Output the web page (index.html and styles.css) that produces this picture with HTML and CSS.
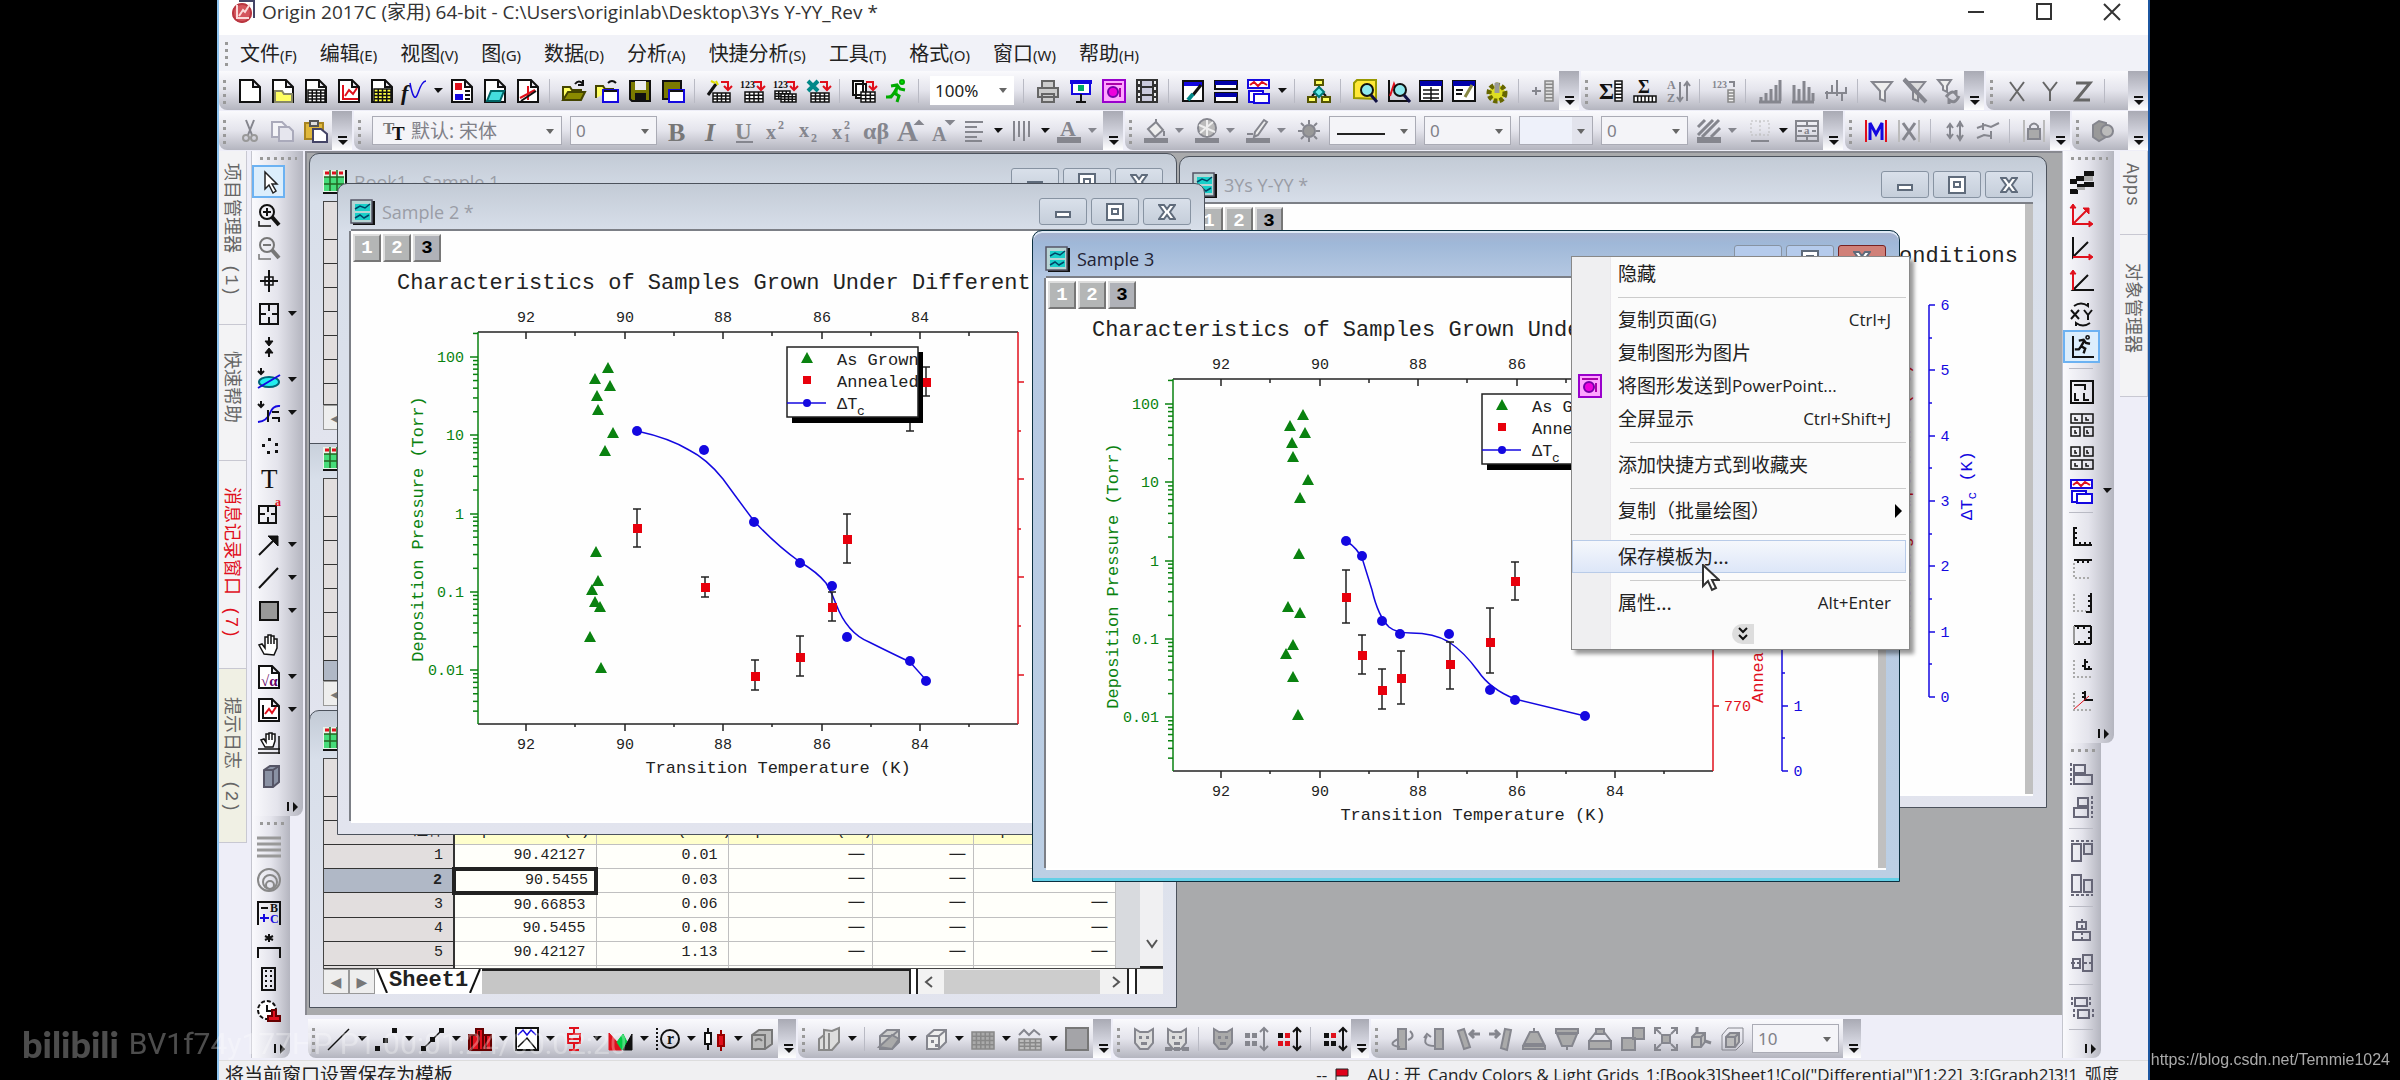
FILE: index.html
```html
<!DOCTYPE html>
<html lang="zh-CN">
<head>
<meta charset="utf-8">
<title>Origin 2017C (家用) 64-bit</title>
<link rel="stylesheet" href="styles.css">
</head>
<body>
<div class="app">
	<!--title bar-->
	<header class="title">
		<svg class="logo" viewBox="0 0 24 24"><path d="M8 1h15v17" fill="#fff" stroke="#446" stroke-width="2"/><circle cx="11" cy="13" r="10" fill="#d4545c"/><circle cx="11" cy="13" r="9" fill="none" stroke="#b83640" stroke-width="2"/><path d="M6 5v13h12M8 16l4-6 2 2 5-8" fill="none" stroke="#fbd9d9" stroke-width="2"/></svg>
		<h1>Origin 2017C (家用) 64-bit - C:\Users\originlab\Desktop\3Ys Y-YY_Rev *</h1>
		<div class="sys">
			<button aria-label="最小化"><svg viewBox="0 0 18 18"><path d="M1 9h16"/></svg></button>
			<button aria-label="最大化"><svg viewBox="0 0 18 18"><path d="M2 1h14v15H2z"/></svg></button>
			<button aria-label="关闭"><svg viewBox="0 0 18 18"><path d="M1 1l16 16M17 1L1 17"/></svg></button>
		</div>
	</header>
	<!--menu-->
	<nav class="menu">
		<i class="grip"></i>
		<a href="#">文件<small>(F)</small></a>
		<a href="#">编辑<small>(E)</small></a>
		<a href="#">视图<small>(V)</small></a>
		<a href="#">图<small>(G)</small></a>
		<a href="#">数据<small>(D)</small></a>
		<a href="#">分析<small>(A)</small></a>
		<a href="#">快捷分析<small>(S)</small></a>
		<a href="#">工具<small>(T)</small></a>
		<a href="#">格式<small>(O)</small></a>
		<a href="#">窗口<small>(W)</small></a>
		<a href="#">帮助<small>(H)</small></a>
	</nav>
	<!--toolbars-->
	<div class="dock">
		<div class="bar">
			<i class="grip"></i>
			<span class="set" data-icons="new newfolder newbook newgraph newmatrix func > layout notes newfn | open opentpl save savetpl | wizard imp1 imp3 impxls | batch run |"></span>
			<span class="combo zoom"><select aria-label="缩放"><option>100%</option></select></span>
			<span class="set" data-icons="| print slide ppt video | digit tile dup > | project | find zoomg results log gear | addcol"></span>
			<i class="more"></i>
		</div>
		<div class="bar">
			<i class="grip"></i>
			<span class="set" data-icons="sumcol sumrow sortaz | setval | bars1 bars2 bars3 | filter filterx filterr"></span>
			<i class="more"></i>
		</div>
		<div class="bar grow">
			<i class="grip"></i>
			<span class="set" data-icons="axx axy axz |"></span>
			<i class="more far"></i>
		</div>
	</div>
	<div class="dock">
		<div class="bar">
			<i class="grip"></i>
			<span class="set" data-icons="cut copy paste"></span>
			<i class="more"></i>
		</div>
		<div class="bar">
			<i class="grip"></i>
			<span class="combo font"><svg class="ic" viewBox="0 0 24 24"><text x="1" y="15" font-size="17" font-family="Liberation Serif" font-weight="bold" fill="#777" stroke="none">T</text><text x="10" y="21" font-size="19" font-family="Liberation Serif" font-weight="bold" fill="#111" stroke="none">T</text></svg><select aria-label="字体"><option>默认: 宋体</option></select></span>
			<span class="combo"><select aria-label="字号"><option>0</option></select></span>
			<span class="set dim" data-icons="bold italic under sup sub supsub greek bigger smaller align ^ valign ^ fcolor >"></span>
			<i class="more"></i>
		</div>
		<div class="bar">
			<i class="grip"></i>
			<span class="set dim" data-icons="fill > palette > pen > bulb"></span>
			<span class="combo line"><select aria-label="线型"><option></option></select></span>
			<span class="combo"><select aria-label="线宽"><option>0</option></select></span>
			<span class="combo swatch"><select aria-label="颜色"><option></option></select></span>
			<span class="combo"><select aria-label="大小"><option>0</option></select></span>
			<span class="set dim" data-icons="hatch > border ^ merge"></span>
			<i class="more"></i>
		</div>
		<div class="bar">
			<i class="grip"></i>
			<span class="set dim" data-icons="maskm maskx | updn curves | lock"></span>
			<i class="more"></i>
		</div>
		<div class="bar grow">
			<i class="grip"></i>
			<span class="set dim" data-icons="cube"></span>
			<i class="more far"></i>
		</div>
	</div>
	<div class="work">
		<!--left tabs-->
		<div class="tabs">
			<a href="#" class="t1">项目管理器 (1)</a>
			<a href="#" class="t2">快速帮助</a>
			<a href="#" class="t1 hot">消息记录窗口 (7)</a>
			<a href="#" class="t1 last">提示日志 (2)</a>
		</div>
		<div class="side">
			<div class="vbar wide">
				<i class="vgrip"></i>
				<div class="vset" data-icons="pointer* zoomin zoomout cross reader ^ select cyan ^ curve ^ dots text boxa arrow ^ slash ^ rect ^ hand sqrt ^ insgraph ^ handax box3d"></div>
				<i class="vmore"></i>
			</div>
			<div class="vbar thin">
				<i class="vgrip"></i>
				<div class="vset" data-icons="lines rings bc star colsc clock"></div>
				<i class="vmore two"></i>
			</div>
		</div>
		<div class="center">
			<main class="mdi">
				<section class="win book" id="book2">
					<div class="cap"><i data-ic="book"></i><h2>Book2 - Sample 2</h2></div>
					<div class="sheet"><table><tr class="top"><th></th></tr><tr><th></th></tr><tr><th></th></tr><tr><th></th></tr><tr><th></th></tr><tr><th></th></tr><tr><th></th></tr><tr class="cur"><th></th></tr></table></div>
					<div class="foot"><button>◀</button><button>▶</button></div>
				</section>
				<section class="win book" id="book1">
					<div class="cap"><i data-ic="book"></i><h2>Book1 - Sample 1</h2><span class="ctl"></span></div>
					<div class="sheet"><table><tr class="top"><th></th></tr><tr><th></th></tr><tr><th></th></tr><tr><th></th></tr><tr><th></th></tr><tr><th></th></tr><tr><th></th></tr><tr><th></th></tr></table></div>
					<div class="foot"><button>◀</button><button>▶</button></div>
				</section>
				<section class="win book" id="book3">
					<div class="cap"><i data-ic="book"></i><h2>Book3 - Sample 3</h2><span class="ctl"></span></div>
					<div class="sheet">
						<table>
							<colgroup><col class="c0"><col class="c1"><col class="c2"><col class="c3"><col class="c4"><col class="c5"></colgroup>
							<tr class="top"><th></th><th></th><th></th><th></th><th></th><th></th></tr>
							<tr><th></th><td></td><td></td><td></td><td></td><td></td></tr>
							<tr class="name"><th>注释</th><td>Temperature (K)</td><td>Pressure (Torr)</td><td>Temperature (°C)</td><td></td><td>Sample</td></tr>
							<tr><th>1</th><td>90.42127</td><td>0.01</td><td>—</td><td>—</td><td>—</td></tr>
							<tr class="cur"><th>2</th><td class="sel">90.5455</td><td>0.03</td><td>—</td><td>—</td><td>—</td></tr>
							<tr><th>3</th><td>90.66853</td><td>0.06</td><td>—</td><td>—</td><td>—</td></tr>
							<tr><th>4</th><td>90.5455</td><td>0.08</td><td>—</td><td>—</td><td>—</td></tr>
							<tr><th>5</th><td>90.42127</td><td>1.13</td><td>—</td><td>—</td><td>—</td></tr>
							<tr><th></th><td></td><td></td><td></td><td></td><td></td></tr>
						</table>
						<div class="vscroll"><svg viewBox="0 0 12 10"><path d="M1 1l5 7 5-7"/></svg></div>
					</div>
					<div class="foot">
						<button aria-label="上一张">◀</button><button aria-label="下一张">▶</button>
						<svg class="edge" viewBox="0 0 14 24"><path d="M2 0l10 24"/></svg><a href="#">Sheet1</a><svg class="edge" viewBox="0 0 14 24"><path d="M12 0L2 24"/></svg>
						<span class="fill"></span>
						<div class="hscroll"><svg viewBox="0 0 10 12"><path d="M8 1L2 6l6 5"/></svg><span></span><svg viewBox="0 0 10 12"><path d="M2 1l6 5-6 5"/></svg></div>
						<span class="corner"></span>
					</div>
				</section>
				<section class="win" id="g3ys">
					<div class="cap"><i data-ic="graph"></i><h2>3Ys Y-YY *</h2><span class="ctl"></span></div>
					<div class="client" data-plot="all"></div>
				</section>
				<section class="win" id="sample2">
					<div class="cap"><i data-ic="graph"></i><h2>Sample 2 *</h2><span class="ctl"></span></div>
					<div class="client" data-plot="s2"></div>
				</section>
				<section class="win active" id="sample3">
					<div class="cap"><i data-ic="graph"></i><h2>Sample 3</h2><span class="ctl"></span></div>
					<div class="client" data-plot="s3"></div>
				</section>
				<!--context menu-->
				<ul class="pop">
					<li><a href="#">隐藏</a></li>
					<li class="sep long"></li>
					<li><a href="#">复制页面<small>(G)</small><kbd>Ctrl+J</kbd></a></li>
					<li><a href="#">复制图形为图片</a></li>
					<li><i data-ic="ppt"></i><a href="#">将图形发送到<span>PowerPoint...</span></a></li>
					<li><a href="#">全屏显示<kbd>Ctrl+Shift+J</kbd></a></li>
					<li class="sep"></li>
					<li><a href="#">添加快捷方式到收藏夹</a></li>
					<li class="sep"></li>
					<li class="sub"><a href="#">复制（批量绘图）</a></li>
					<li class="sep"></li>
					<li class="on"><a href="#">保存模板为...</a></li>
					<li class="sep"></li>
					<li><a href="#">属性...<kbd>Alt+Enter</kbd></a></li>
					<li class="expand"><svg viewBox="0 0 12 16"><path d="M2 2l4 4 4-4M2 9l4 4 4-4"/></svg></li>
				</ul>
				<svg class="mouse" viewBox="0 0 18 28"><path d="M1 1v21l5-5 4 9 4-2-4-8h7z" fill="#fff" stroke="#333" stroke-width="2"/></svg>
			</main>
			<div class="dock bottom">
				<div class="bar">
					<i class="grip"></i>
					<span class="set" data-icons="pline ^ pscat ^ plinesym ^ pbar ^ pmulti ^ pbox ^ parea ^ ppolar ^ pcandle ^ box3g"></span>
					<i class="more"></i>
				</div>
				<div class="bar">
					<i class="grip"></i>
					<span class="set" data-icons="bars3d ^ | surf ^ cube3d ^ contour ^ image ^ gsquare"></span>
					<i class="more"></i>
				</div>
				<div class="bar">
					<i class="grip"></i>
					<span class="set" data-icons="mask1 mask2 | mask3 dotsg dotsr | dotsr2"></span>
					<i class="more"></i>
				</div>
				<div class="bar">
					<i class="grip"></i>
					<span class="set dim" data-icons="rot1 rot2 tilt1 tilt2 trap1 trap2 persp1 persp2 fit cubea cubeb"></span>
					<span class="combo"><select aria-label="角度"><option>10</option></select></span>
					<i class="more"></i>
				</div>
			</div>
		</div>
		<div class="side right">
			<div class="vbar wide">
				<i class="vgrip"></i>
				<div class="vset" data-icons="checker axr1 axr2 axr3 xy runax* - merge1 grid4a grid4b dup ^ - axl axt axrr axbox axin axinr"></div>
				<i class="vmore"></i>
			</div>
			<div class="vbar thin">
				<i class="vgrip"></i>
				<div class="vset" data-icons="all1 all2 - alt1 alt2 - alc1 alc2 - same -"></div>
				<i class="vmore two"></i>
			</div>
		</div>
		<div class="tabs right">
			<a href="#" class="t3">Apps</a>
			<a href="#" class="t4">对象管理器</a>
		</div>
	</div>
	<!--status bar-->
	<footer class="status">
		<span class="tip">将当前窗口设置保存为模板</span>
		<span>--</span>
		<svg viewBox="0 0 16 20"><path d="M2 20V3h12v7H2" fill="#e0001a" stroke="#222"/></svg>
		<span>AU : 开</span>
		<span>Candy Colors &amp; Light Grids</span>
		<span>1:[Book3]Sheet1!Col("Differential")[1:22]</span>
		<span>3:[Graph2]3!1</span>
		<span>弧度</span>
	</footer>
</div>
<div class="mark-l"><b>bilibili</b><span>BV1f74y177HP P1 00:01:24/00:02:20</span></div>
<div class="mark-r">https://blog.csdn.net/Temmie1024</div>
<script src="script.js"></script>
</body>
</html>
```
FILE: styles.css
```css
*{box-sizing:border-box;margin:0;padding:0;}
body{background:#000;font:18px "Open Sans","Noto Sans CJK SC",sans-serif;color:#222;height:100vh;overflow:hidden;}
ul{list-style:none;}
a{color:inherit;text-decoration:none;}
button{border:0;background:none;font:inherit;color:inherit;}
i{font-style:normal;}
svg{display:block;}
h1,h2{font-size:18px;font-weight:normal;white-space:nowrap;}
/*frame*/
.app{margin:0 250px 0 217px;height:calc(100vh + 8px);display:flex;flex-direction:column;background:#eeeef8;border-left:2px solid #8ec4f0;border-right:2px solid #1c56a0;}
.title{height:35px;flex:none;display:flex;align-items:flex-start;background:#fff;padding:0 12px;}
.title .logo{width:24px;height:24px;}
.title h1{margin-left:7px;font-size:19px;line-height:24px;color:#333;flex:1;}
.sys{display:flex;gap:50px;padding:3px 15px 0 0;}
.sys svg{width:18px;height:18px;fill:none;stroke:#333;stroke-width:2;}
.menu{height:36px;flex:none;display:flex;align-items:center;padding-left:2px;gap:23px;background:#f1f2f8;font:20px/34px "Noto Sans CJK SC",sans-serif;white-space:nowrap;}
.menu .grip{margin-right:-18px;}
.menu small{font:15px "Noto Sans",sans-serif;}
.grip{width:12px;height:26px;margin-left:2px;flex:none;background:radial-gradient(circle,#999 2px,transparent 2px) 0 0/7px 7px repeat-y;}
/*toolbars*/
.dock{display:flex;gap:2px;height:40px;flex:none;background:#eeeef8;}
.bar{display:flex;align-items:center;height:39px;background:linear-gradient(#fafafd,#e4e4ec 50%,#b4b5bf);border-radius:0 0 8px 8px;}
.bar.grow{flex:1;}
.set{display:flex;align-items:center;}
.set button{width:33px;height:33px;display:flex;align-items:center;justify-content:center;}
.ic{width:24px;height:24px;fill:none;stroke:#111;stroke-width:2;overflow:visible;}
.dim .ic{stroke:#85868e;}
.bsep{width:13px;height:24px;border-left:1px solid #b9bac4;margin-left:5px;margin-right:-5px;}
.drop{width:14px;height:5px;background:linear-gradient(#111,#111);clip-path:polygon(3px 0,12px 0,7px 5px);}
.set.dim .drop.soft{width:18px;background:#85868e;}
.more{width:20px;height:39px;margin-left:auto;flex:none;align-self:stretch;background:linear-gradient(#a9aab4,#d5d6e0 60%,#fff);position:relative;}
.more:before{content:"";position:absolute;left:6px;bottom:12px;width:9px;height:2px;background:#111;}
.more:after{content:"";position:absolute;left:6px;bottom:5px;border:5px solid transparent;border-top-color:#111;border-bottom:0;}
.combo{height:29px;width:87px;margin:0 4px;border:1px solid #aaabb5;background:#f4f4f8;display:flex;align-items:center;position:relative;}
.combo:after{content:"";position:absolute;right:7px;top:12px;border:4px solid transparent;border-top:5px solid #666;border-bottom:0;}
.combo select{appearance:none;border:0;background:transparent;width:100%;padding-left:5px;font:17px "Noto Sans","Noto Sans CJK SC",sans-serif;color:#808088;}
.combo.zoom{border:0;background:#fff;width:84px;margin-right:4px;}
.combo.zoom select{color:#222;}
.combo.font{width:190px;}
.combo.font .ic{margin-left:9px;}
.combo.font select{font-size:19px;}
.combo.line:before{content:"";position:absolute;left:7px;top:16px;width:48px;height:2px;background:#222;}
.combo.swatch{width:74px;background:linear-gradient(90deg,#eef1fa 52px,#e2e3ec 52px);}
/*work area*/
.work{flex:1;display:flex;min-height:0;}
.tabs{width:32px;flex:none;display:flex;flex-direction:column;background:#eeeef8;}
.tabs a{writing-mode:vertical-rl;text-orientation:sideways;font:18px/22px "Liberation Mono","Noto Sans CJK SC",monospace;color:#666;white-space:pre;border-right:1px solid #c8c8d2;border-bottom:1px solid #c8c8d2;background:#f3f3f5;width:28px;display:flex;justify-content:flex-start;padding:12px 4px 0 0;}
.tabs .t1{height:174px;}
.tabs .t2{height:136px;padding-top:26px;}
.tabs .hot{color:#e0101c;height:208px;padding-top:26px;}
.tabs .last{background:#f0f0e4;padding-top:28px;}
.tabs.right .t3{height:84px;margin-left:4px;}
.tabs.right .t4{height:162px;margin-left:4px;padding-top:28px;}
.side{width:54px;flex:none;display:flex;flex-direction:column;}
.vbar{display:flex;flex-direction:column;background:linear-gradient(90deg,#fafafd,#e4e4ec 50%,#b4b5bf);border-radius:0 0 8px 0;border-left:1px solid #c4c5ce;}
.vbar.wide{width:52px;height:665px;}
.right .vbar.wide{height:592px;}
.vbar.thin{width:39px;flex:1;margin-bottom:2px;}
.vgrip{height:14px;margin:0 6px;flex:none;background:radial-gradient(circle,#999 2px,transparent 2px) 0 4px/7px 7px repeat-x;}
.vset{display:grid;grid-template-columns:33px 14px;}
.right .vset{grid-template-columns:37px 14px;}
.vset button{grid-column:1;height:33px;display:flex;align-items:center;justify-content:center;}
.vset .drop{grid-column:2;align-self:center;}
.vset .bsep{grid-column:1;width:24px;height:7px;margin:5px 0 0 6px;border:0;border-top:1px solid #b9bac4;}
.vset button.down{border:2px solid #6cb2f2;background:#dceefc;}
.vmore{margin-top:auto;height:16px;flex:none;position:relative;}
.vmore:before{content:"";position:absolute;right:14px;top:2px;width:2px;height:9px;background:#111;}
.vmore:after{content:"";position:absolute;right:5px;top:2px;border:5px solid transparent;border-left-color:#111;border-right:0;}
.center{flex:1;min-width:0;display:flex;flex-direction:column;}
.mdi{flex:1;position:relative;overflow:hidden;background:#a9aaac;border-top:2px solid #888990;border-left:2px solid #888990;}
.dock.bottom{height:45px;padding:4px 0 0 3px;}
.bottom .more{width:18px;}
/*mdi windows, each is placed on the free canvas*/
.win{position:absolute;width:868px;height:652px;border:1px solid #4c525c;border-radius:10px 10px 0 0;padding:0 13px 13px;background:linear-gradient(#c3cbd6,#d8dfea 48px,#e2e4ee);display:flex;flex-direction:column;}
.win.active{background:linear-gradient(#a8b0cc,#9fb8d8 12px,#b5c8e2 46px,#bccfe4);border-color:#0c3040;box-shadow:inset 0 -3px #63cfe6,inset 0 2px #dfe9f5;}
.cap{height:47px;flex:none;display:flex;align-items:center;padding-top:8px;}
.cap h2{margin-left:7px;color:#9a9da6;flex:1;}
.active .cap h2{color:#223;}
.ctl{display:flex;gap:4px;}
.ctl button{width:48px;height:27px;border:1px solid #8793a2;border-radius:3px;background:linear-gradient(#d9e0ea,#c5ceda);display:flex;align-items:center;justify-content:center;}
.ctl svg{width:18px;height:18px;fill:#fff;stroke:#5f6b7b;stroke-width:2;}
.active .ctl button{background:#b5cbec;}
.active .ctl button:last-child{background:#d08078;border-color:#722;}
#book1{left:2px;top:0;height:291px;}
#book2{left:2px;top:277px;height:290px;}
#book3{left:2px;top:557px;height:298px;}
#g3ys{left:872px;top:3px;}
#sample2{left:30px;top:30px;}
#sample3{left:725px;top:77px;}
.client{position:relative;flex:1;background:#fefefe;border-right:8px solid #c0c0c0;box-shadow:0 -2px #7c7f86,-2px 0 #7c7f86,0 2px #fff;}
.client>svg{width:832px;height:590px;}
.layers{position:absolute;left:2px;top:3px;display:flex;gap:2px;}
.layers button{width:28px;height:28px;background:#b4b6b6;border:2px solid;border-color:#ddd #777 #777 #ddd;font:bold 19px/22px "Liberation Mono",monospace;color:#fff;}
.layers button:last-child{color:#000;background:#b0b2b8;}
.client text{font-family:"Liberation Mono",monospace;font-size:15px;}
.client .head{font-size:22px;}
.client .lab{font-size:17px;}
.client .idx{font-size:13px;}
/*worksheets*/
.sheet{flex:1;min-height:0;overflow:hidden;display:flex;background:#d8dade;border:solid #444;border-width:1px 0 1px 1px;}
.sheet table{border-collapse:collapse;table-layout:fixed;width:791px;height:0;background:#fffffa;}
.sheet tr{height:24px;}
.sheet tr.top{height:37px;}
.sheet th,.sheet td{border:1px solid #c0c0c0;text-align:right;font:15px/22px "Liberation Mono","Noto Sans CJK SC",monospace;padding:0 10px 0 0;height:24px;white-space:nowrap;overflow:hidden;}
.sheet td:nth-child(n+4){font:20px/14px "Noto Sans CJK SC",sans-serif;padding-right:6px;vertical-align:top;}
.sheet th{background:#e2dede;border:solid #333;border-width:0 2px 1px 0;}
.sheet .top th{height:37px;}
.sheet .name td,.sheet .name td:nth-child(n+4){background:#ffffcc;padding:0;text-align:left;font:15px/22px "Liberation Mono",monospace;}
.sheet .cur th{background:#b0b8c6;font-weight:bold;}
.sheet td.sel{border:4px solid #222;line-height:16px;padding-right:6px;}
.c0{width:130px;}.c1{width:142px;}.c2{width:132px;}.c3{width:144px;}.c4{width:101px;}.c5{width:142px;}
.vscroll{width:26px;margin-left:24px;background:#f0f0f2;display:flex;align-items:flex-end;justify-content:center;border-bottom:2px solid #222;padding-bottom:16px;}
.foot svg,.vscroll svg{fill:none;stroke:#555;stroke-width:2;width:12px;height:12px;}
.foot{height:25px;flex:none;display:flex;align-items:stretch;background:#fff;}
.foot button{width:26px;background:#eee;border:1px solid #999;font:14px "DejaVu Sans";color:#777;}
.foot .edge{width:14px;height:24px;stroke:#111;}
.foot a{font:bold 22px/24px "Liberation Mono",monospace;}
.foot .fill{flex:1;background:#c6c6c6;border:solid #222;border-width:2px 2px 0 0;}
.hscroll{width:213px;margin-left:5px;display:flex;align-items:center;justify-content:space-around;border:solid #222;border-width:0 2px;background:#f2f2f2;}
.hscroll span{width:156px;height:24px;background:#cdcdcd;}
.corner{width:28px;margin-left:6px;border-left:2px solid #222;background:#f4f4f4;}
/*context menu*/
.pop{position:absolute;left:1264px;top:103px;width:339px;padding:0 3px 0 0;background:linear-gradient(90deg,#efeff1 38px,#d8d4dc 38px,#fbfbfb 39px);border:1px solid #888;box-shadow:4px 4px 4px rgba(0,0,0,.4);font:19px/32px "Noto Sans CJK SC",sans-serif;}
.pop li{height:33px;display:flex;position:relative;}
.pop a{flex:1;height:32px;margin-left:46px;display:flex;align-items:center;white-space:nowrap;}
.pop small,.pop kbd,.pop span{font:17px "Open Sans",sans-serif;}
.pop kbd{margin-left:auto;padding-right:15px;}
.pop [data-ic]{position:absolute;left:6px;top:5px;}
.pop .sep{height:13px;margin-left:58px;background:linear-gradient(#ccc,#ccc) 0 7px/100% 1px no-repeat;}
.pop .sep.long{margin-left:46px;}
.pop .on{background:linear-gradient(#f6f8fc,#dce6f8);box-shadow:inset 0 0 0 1px #b8cbe8;}
.pop .sub:after{content:"";position:absolute;right:4px;top:10px;border:7px solid transparent;border-left-color:#000;border-right:0;}
.pop .expand{height:30px;justify-content:center;align-items:center;padding-left:8px;}
.expand svg{width:22px;height:20px;padding:2px;background:#ddd;border-radius:10px 0 0 10px;fill:none;stroke:#111;stroke-width:2;}
.mouse{position:absolute;left:1395px;top:411px;width:18px;height:28px;}
/*status*/
.status{height:28px;flex:none;background:#f0f0f2;border-top:1px solid #ddd;display:flex;align-items:flex-start;gap:7px;padding:0 29px 0 6px;font:17px/28px "Open Sans","Noto Sans CJK SC",sans-serif;white-space:nowrap;}
.status .tip{margin-right:auto;font-size:19px;}
.status svg{width:16px;height:20px;margin:5px 10px 0 0;}
/*watermarks lie over everything*/
.mark-l,.mark-r{position:fixed;white-space:nowrap;color:#fff;}
.mark-l{left:22px;bottom:14px;opacity:.3;display:flex;align-items:center;gap:10px;font:30px/40px Roboto,sans-serif;}
.mark-l b{font:900 36px/44px Lato,sans-serif;}
.mark-r{right:10px;bottom:10px;color:#aaa;font:16px/20px "Liberation Sans",sans-serif;}
```
FILE: script.js
```js
var G = '#85868e', R = '#e0101c', B = '#1408e0';
function p(d,s,f,w){
	return '<path d="'+d+'"'+(s?' stroke="'+s+'"':'')+(f?' fill="'+f+'"':'')+(w?' stroke-width="'+w+'"':'')+'/>';
}
function t(s,x,y,size,c,more){
	return '<text x="'+x+'" y="'+y+'" font-size="'+size+'" fill="'+(c||'#111')+'" stroke="none" font-family="Liberation Serif" '+(more||'font-weight="bold"')+'>'+s+'</text>';
}
//grid with n cells
function g(x,y,w,h,n,m,f,c){
	var d = 'M'+x+' '+y+'h'+w+'v'+h+'h-'+w+'z', i;
	for(i=1;i<n;i++) d += 'M'+(x+w*i/n)+' '+y+'v'+h;
	for(i=1;i<m;i++) d += 'M'+x+' '+(y+h*i/m)+'h'+w;
	return p(d,c||'#111',f||'#fff',1.5);
}
//filled boxes
function b(list,c){
	return list.map(function(a){return '<rect x="'+a[0]+'" y="'+a[1]+'" width="'+a[2]+'" height="'+a[3]+'" fill="'+(c||'#111')+'" stroke="none"/>'}).join('');
}
var page = p('M2 1h13l7 7v15H2zM15 1v7h7','#111','#fff'),
	down = p('M14 3h7v7M17 7l4 4 4-4',R,'none'),
	run = '<circle cx="17" cy="3" r="2"/>'+p('M6 7l6-1 3 4 5 1M13 7l-4 7 5 3-2 6M9 14l-3 4H1','','',3),
	front = p('M3 9l7-6h12v12l-7 7H3zM3 9h12v13M15 9l7-6',G,'#ccc'),
	axes = p('M3 1v21h21'),
	lens = '<circle cx="14" cy="11" r="6" fill="#8fe9ee"/>'+p('M18 16l6 7','#114',0,3),
	cat = p('M3 2l5 3h8l5-3v14l-5 6H8l-5-6z',G,'#ddd')+b([[7,9,3,3],[14,9,3,3],[9,15,6,3]],G),
	bottomWins = p('M2 12h14v11H2z',B,'#fff')+p('M7 15h15v9H7z',B,'#fff'),
	mdot = function(c1,c2){return b([[1,6,5,5],[8,6,5,5]],c1)+b([[1,14,5,5],[8,14,5,5]],c2)+p('M20 1v22M16 5l4-4 4 4M16 19l4 4 4-4',c1==G?G:'#111')};
var icons = {
	'new':page,
	newfolder:page+p('M4 12h7l2 3h8v8H4z','#886','#ffff60'),
	newbook:page+g(4,11,17,12,4,4),
	newgraph:page+p('M6 6v14h15',R)+p('M8 17l4-6 4 4 4-6',R),
	newmatrix:page+g(4,10,17,13,4,4,'#ffff40'),
	func:p('M7 4q4 22 8 10t8-12',B,0,1.5)+t('f',-2,21,22,'#111','font-style="italic" font-weight="bold"'),
	layout:page+b([[5,4,7,7]],R)+b([[5,15,8,6]],B)+p('M15 12h5M15 16h5M15 20h5'),
	notes:page+p('M8 12h13l-4 10H4z','#066','#4dd'),
	newfn:page+p('M12 7v14M4 19l15-8',R)+p('M5 22L20 12'),
	open:p('M1 21V8h7l2 3h9v3','#440','#ffff60')+p('M1 21l5-8h17l-4 8z','#440','#8a8a00')+p('M13 5q4-5 8 0M21 1v5h-5'),
	opentpl:p('M1 19V7h7l2 3h9','#440','#ffff60')+p('M8 11h15v12H8z',B,'#fff')+p('M9 12h13')+p('M13 4q4-4 8 0'),
	save:p('M2 2h20v20H4l-2-2z','#111','#7a7a00')+b([[7,2,11,9]],'#eee')+b([[7,14,11,8]]),
	savetpl:p('M2 2h18v18H2z','#111','#7a7a00')+p('M8 11h15v12H8z',B,'#fff')+p('M9 12h13'),
	wizard:p('M1 16L9 5',0,0,3)+p('M9 2l2 4M4 2l4 2','#dd0')+down+g(6,14,17,9,4,3),
	imp1:t('123',0,9,10)+down+g(5,13,18,10,4,3),
	imp3:t('123',0,9,10)+down+g(2,12,15,8,4,3)+g(8,15,15,8,4,3),
	impxls:p('M2 2l10 10M12 2L2 12','#088',0,4)+down+g(5,14,18,9,4,3),
	batch:p('M1 2h10v14H1zM4 5h10v14H4z','#111','#fff')+down+g(9,13,14,10,3,3),
	run:'<g stroke="#0a0" fill="#0e0">'+run+'</g>',
	print:p('M6 9V2h12v7M2 9h20v9H2zM6 15h12v8H6z','#666','#ccc'),
	slide:p('M1 3h22',B,0,4)+p('M3 4h18v11H3z',B,'#fff')+p('M12 15v7M7 23h10')+b([[9,6,6,6]],'#0a6'),
	ppt:p('M1 1h22v22H1z','#90c','#ffa6ff')+p('M4 5h16','#a0a')+'<circle cx="11" cy="13" r="5" fill="#e0d" stroke="#70a"/>'+p('M18 9v9','#a0a'),
	video:b([[1,0,22,24]],'#333')+b([[7,2,10,5],[7,9,10,6],[7,17,10,5]],'#ccd')+b([[3,2,2,3],[3,8,2,3],[3,14,2,3],[3,19,2,3],[19,2,2,3],[19,8,2,3],[19,14,2,3],[19,19,2,3]],'#eee'),
	digit:p('M2 2h20v20H2z','#111','#fff')+b([[3,3,18,4]],B)+p('M20 6l-8 10',0,0,3)+p('M12 15l-5 6','#088',0,4),
	tile:p('M1 2h22v8H1zM1 14h22v9H1z','#111','#fff')+b([[1,2,22,4],[1,14,22,4]],'#00a'),
	dup:p('M1 1h21v8H1z',B,'#fff')+p('M3 6l4-3 4 4 4-4 5 3',R)+bottomWins,
	project:p('M12 6v5M5 17l5-5M19 17l-5-5')+p('M8 1h8v5H8zM1 18h8v5H1zM15 18h8v5h-8z','#550','#ffff60')+p('M12 8l5 5-5 5-5-5z','#077','#6ee'),
	find:p('M1 19V4l3-3h19v19z','#990','#ffe838')+lens,
	zoomg:axes+p('M4 17l4-12 3 8 4-8',R)+lens,
	results:p('M1 2h22v20H1z','#111','#fff')+b([[1,2,22,5]],'#00a')+p('M4 11h16M4 15h16M4 19h16M12 8v14',0,0,1.5),
	log:p('M1 2h22v20H1z','#111','#fff')+b([[1,2,22,5]],'#00a')+p('M4 11h7M4 15h6')+p('M20 6l-7 12','#884',0,3),
	gear:'<circle cx="12" cy="14" r="8" stroke="#660" stroke-width="5" stroke-dasharray="4 2" fill="#dd2"/>'+p('M12 4v10','#999',0,5),
	addcol:p('M1 12h9M5 8v8',G)+g(14,2,8,20,1,6,'#ddd','#888'),
	sumcol:t('Σ',-1,20,23)+g(15,2,7,20,1,6),
	sumrow:t('Σ',5,14,18)+g(1,17,22,6,6,1),
	sortaz:t('A',1,10,12,G)+t('Z',1,23,12,G)+p('M14 3v19M11 18l3 4 3-4M21 22V3M18 7l3-4 3 4',G),
	setval:t('123',0,9,10,G)+p('M17 3h5v5',G)+g(16,11,6,12,1,4,'#eee','#888'),
	bars1:p('M1 23h22M3 22v-4M8 22v-8M13 22V10M18 22V6M22 22V1',G,0,3),
	bars2:p('M1 23h22M3 22V6M8 22V10M13 22V2M18 22V8M22 22v-8',G,0,3),
	bars3:p('M1 14h22M3 20v-8M8 14V6M13 17V1M18 22v-9M22 14V8',G,0,2),
	filter:p('M2 3h20l-7 9v10l-5-2v-8z',G,'#eee'),
	filterx:p('M2 3h20l-7 9v10l-5-2v-8z',G,'#ddd')+p('M1 0l22 23',G,0,4),
	filterr:p('M2 1h13l-4 6v6l-4-2V7z',G,'#eee')+p('M10 18q6-8 10-3v-4M23 17q-4 9-10 4v4',G,0,3),
	axx:p('M5 3l14 19M19 3L5 22','#666'),
	axy:p('M5 3l7 9 7-9M12 12v10','#666'),
	axz:p('M5 4h14L5 21h14','#666',0,3),
	cut:p('M8 1l6 15M16 1l-6 15',G)+'<circle cx="8" cy="19" r="3" stroke="#999"/><circle cx="16" cy="19" r="3" stroke="#999"/>',
	copy:p('M1 3h10l4 4v11H1z','#aab','#f4f4f8')+p('M8 8h10l4 4v10H8z','#aab','#e6e6ee'),
	paste:p('M1 4h18v16H1z','#a88420','#e0b83c')+p('M6 2h8v5H6z','#555','#ddd')+p('M9 10h8l6 5v8H9z','#446','#fff'),
	bold:t('B',2,22,26,'#777'),italic:t('I',6,22,26,'#777','font-style="italic" font-weight="bold"'),under:t('U',3,20,23,'#888')+p('M4 23h17',G),
	sup:t('x',1,20,20,G)+t('2',13,10,12,G),sub:t('x',1,18,20,G)+t('2',13,23,12,G),supsub:t('x',1,20,20,G)+t('2',13,10,12,G)+t('1',13,23,12,G),
	greek:t('αβ',-1,20,24,G),
	bigger:t('A',0,22,29,G)+p('M19 5l3-3 3 3z',G,G),smaller:t('A',2,22,20,G)+p('M17 2l3 3 3-3z',G,G),
	align:p('M2 3h18M2 8h12M2 13h18M2 18h12M2 22h17',G),
	valign:p('M4 2v20M9 2v16M14 2v20M19 2v16',G),
	fcolor:t('A',3,17,22,G)+b([[0,18,24,6]],G),
	fill:p('M4 10l8-7 7 8-8 7zM12 3V0M20 12v5',G,'#eee')+b([[0,19,24,5]],G),
	palette:'<circle cx="12" cy="9" r="9" fill="#bbb"/>'+p('M4 6l16 7M12 1v16M5 14l13-11','#eee')+b([[0,19,24,5]],G),
	pen:p('M18 1l3 2-9 13-4 2 1-5zM1 15h6',G,'#eee')+b([[0,19,24,5]],G),
	bulb:'<circle cx="12" cy="12" r="6" fill="#999"/>'+p('M12 1v4M12 19v4M1 12h4M19 12h4M4 4l3 3M20 4l-3 3M4 20l3-3M20 20l-3-3',G),
	hatch:p('M1 8l7-7M1 16L16 1M5 18L22 1M14 18l9-9',G,0,3)+b([[0,18,24,6]],G),
	border:p('M3 2h18v14H3zM12 2v14','#bbb',0,1).replace('/>',' stroke-dasharray="2 2"/>')+p('M3 22h18',G),
	merge:p('M1 2h22v20H1zM1 7h22M1 17h22M12 2v5M12 17v5',G)+t('a',9,15,11,G)+p('M3 12h4M17 12h4',G),
	maskm:p('M2 1v22M22 1v22',R)+p('M6 21V4l6 11 6-11v17',B,0,3),
	maskx:p('M2 1v22M22 1v22','#bbb')+p('M6 4l12 17M18 4L6 21',G,0,3),
	updn:p('M7 6v12M4 9l3-4 3 4M4 15l3 4 3-4M17 2v20M14 8l3-5 3 5M14 16l3 5 3-5',G),
	curves:p('M1 9l8-3 6 2 8-4M1 19l7-3 6 1M7 4v7M15 12v8',G),
	lock:p('M2 1v22M22 1v22','#bbb')+p('M6 10h12v10H6z',G,'#aaa')+p('M8 10V7q4-5 8 0v3',G),
	cube:p('M2 6l6-4 7 2v14l-7 4-6-4z',G,'#999')+'<circle cx="16" cy="12" r="6" fill="#bbb"/>',
	pointer:p('M8 2v17l4-4 4 8 3-2-4-7h5z','#222','#fff',1.5),
	zoomin:'<circle cx="10" cy="9" r="7"/>'+p('M6 9h8M10 5v8')+p('M15 14l7 8',0,0,4)+p('M2 18v5h12',0,0,1.5),
	zoomout:'<circle cx="10" cy="9" r="7" stroke="#777"/>'+p('M6 9h8','#777')+p('M15 14l7 8','#777',0,4)+p('M2 18v5h12','#777',0,1.5),
	cross:p('M12 1v22M3 12h18')+p('M8 8h8v8H8z',0,0,1.5),
	reader:p('M3 2h18v20H3zM12 2v7M12 15v7M3 12h6M15 12h6'),
	select:p('M12 2v8M12 14v8')+p('M8 6l4 5 4-5zM8 18l4-5 4 5z','','#111',1),
	cyan:'<ellipse cx="12" cy="14" rx="10" ry="5" stroke="#067" fill="#2ee"/>'+p('M1 20L23 7',B)+p('M4 0v6M1 3l3 3 3-3'),
	curve:p('M1 21q9-1 12-9t10-7',B)+p('M4 0v6M1 3l3 3 3-3M11 9v12M15 11h7M15 17h7v4'),
	dots:b([[11,4,3,3],[5,10,3,3],[18,9,3,3],[10,17,3,3],[18,16,3,3]]),
	text:t('T',4,21,27,'#111','font-weight="normal"'),
	boxa:p('M2 6h17v17H2zM11 6v6M11 17v6M2 14h6M14 14h5')+t('a',18,6,12,R),
	arrow:p('M2 22L18 6')+p('M11 3h10v10z','','#111',1),
	slash:p('M2 22L21 2'),
	rect:p('M3 3h18v18H3z','#111','#999'),
	hand:p('M7 22L2 13l3-1 3 4V5h3v7-9h3v9-8h3v8-5h3v9l-3 7z','#111','#fff',1.5),
	sqrt:page+t('√α',4,21,15,'#606'),
	insgraph:page+p('M6 7v13h14')+p('M8 16l4-5 3 4 4-6',R),
	handax:p('M8 16L4 9l3-1 2 3V3h3v6-7h3v7-6h3v7l-2 6z','#111','#fff',1.5)+p('M1 18h22M1 22h22M22 5v18',0,0,1.5),
	box3d:p('M7 6l6-4h9v16l-6 5H7zM7 6h9v17M16 6l6-4','#556','#8a92a4'),
	lines:p('M0 3h24M0 9h24M0 15h24M0 21h24','#999',0,3),
	rings:'<circle cx="12" cy="12" r="11" stroke="#888"/><circle cx="13" cy="14" r="7" stroke="#888"/><circle cx="13" cy="17" r="4" stroke="#888"/>',
	bc:p('M1 24V1h22v23')+p('M4 7h7')+p('M3 17h9M7 13v8',B)+t('B',13,11,12)+t('C',13,22,12,B),
	star:p('M12 0v8M8 2l8 4M16 2L8 6')+p('M1 24V14h22v10'),
	colsc:p('M5 1h13v22H5z')+p('M9 3v18M14 3v18').replace('/>',' stroke-dasharray="2 3"/>'),
	clock:'<circle cx="10" cy="10" r="9" fill="#fff" stroke-dasharray="4 2"/>'+p('M10 5v6h5')+p('M15 10h4v6h4v5H11v-5h4z','#600',R),
	checker:b([[14,1,10,5],[6,6,8,5],[0,9,7,5],[14,12,10,5],[7,14,8,5],[0,19,8,5]])+b([[14,6,9,5],[7,17,8,3]],'#aaa'),
	axr1:p('M3 2v19h19',R)+p('M3 21L18 6',R)+p('M0 5l3-4 3 4zM19 18l4 3-4 3zM13 5h6v6z',R,R,1),
	axr2:p('M3 1v20L18 6')+p('M3 21h19',R)+p('M19 18l4 3-4 3z',R,R,1),
	axr3:p('M24 21H3L18 6')+p('M3 2v19',R)+p('M0 5l3-4 3 4z',R,R,1),
	xy:p('M1 8l8 9M9 8l-8 9M14 8l4 5 4-5M18 13v5M4 4q7-5 14 0V1M20 21q-7 5-14 0v3'),
	runax:axes+'<g transform="translate(4 0) scale(.8)">'+run+'</g>',
	merge1:p('M1 1h22v22H1zM4 5h11v5M5 13v7h4M14 13v7h5'),
	grid4a:p('M1 1h22v9H1zM12 1v9M1 14h9v9H1zM14 14h9v9h-9zM5 4v3h3M16 4v3h3M5 17v3h2M17 17v3h2',0,0,1.5),
	grid4b:p('M1 14h22v9H1zM12 14v9M1 1h9v9H1zM14 1h9v9h-9zM5 17v3h3M16 17v3h3M5 4v3h2M17 4v3h2',0,0,1.5),
	axl:p('M4 3v18h18M4 4h3M4 9h3M4 14h3M10 21v-3M15 21v-3M20 21v-3'),
	axt:p('M4 3h18M8 3v3M13 3v3M18 3v3')+p('M4 6v15h17','#aaa').replace('/>',' stroke-dasharray="2 2"/>'),
	axrr:p('M21 3v19h-5M21 6h-3M21 11h-3M21 16h-3')+p('M4 4v17h12','#aaa').replace('/>',' stroke-dasharray="2 2"/>'),
	axbox:p('M21 3v18M4 3h17M4 21h17M8 3v3M14 3v3M9 21v-3M15 21v-3M21 9h-3M21 15h-3')+p('M4 3v18','#999'),
	axin:p('M15 3v10h7M15 6h3M15 10h-3M19 13v-3')+p('M4 4v17h17','#aaa').replace('/>',' stroke-dasharray="2 2"/>'),
	axinr:p('M15 2v9h8M12 4h3M12 8h3')+p('M3 21L19 7',R,0,1)+p('M4 4v17h17','#aaa').replace('/>',' stroke-dasharray="2 2"/>'),
	all1:p('M4 3h11v8H4zM4 13h18v9H4z','#667')+p('M1 1v22','#667').replace('/>',' stroke-dasharray="3 2"/>'),
	all2:p('M8 3h10v8H8zM4 13h14v9H4z','#667')+p('M22 1v22','#667').replace('/>',' stroke-dasharray="3 2"/>'),
	alt1:p('M2 4h9v17H2zM14 4h8v10h-8z','#667')+p('M1 1h22','#667').replace('/>',' stroke-dasharray="3 2"/>'),
	alt2:p('M2 2h9v17H2zM14 7h8v12h-8z','#667')+p('M1 22h22','#667').replace('/>',' stroke-dasharray="3 2"/>'),
	alc1:p('M7 4h9v7H7zM3 14h17v8H3z','#667')+p('M12 1v23','#667').replace('/>',' stroke-dasharray="4 2"/>'),
	alc2:p('M3 8h7v9H3zM13 4h9v16h-9z','#667')+p('M1 12h23','#667').replace('/>',' stroke-dasharray="4 2"/>'),
	same:p('M5 2h12v8H5zM8 14h11v8H8z','#667')+p('M2 1v10M20 1v10M4 13v10M23 13v10','#667').replace('/>',' stroke-dasharray="3 2"/>'),
	pline:p('M1 23L22 2',0,0,1.5),
	pscat:b([[1,19,5,5],[9,11,5,5],[18,1,5,5]]),
	plinesym:p('M3 21L20 4',0,0,1.5)+b([[0,19,5,5],[9,10,5,5],[18,1,5,5]]),
	pbar:p('M1 23V8h7V2h7v21M15 8h8v15H1','#600',R)+p('M4 9v13M11 4v18M18 9v13','#500'),
	pmulti:p('M1 1h22v22H1z','#111','#fff')+p('M3 8l5-5 4 5 4-5 5 5',B,0,1.5)+p('M3 20l9-9 9 11',0,0,1.5),
	pbox:p('M7 1h10M12 1v6M6 7h12v9H6zM6 12h12M12 16v7M7 23h10',R),
	parea:p('M0 23V6l8 9 5 8z',R,R,1)+p('M8 15l6-8 4 8-5 8z','#0c4','#0c4',1)+p('M14 23l9-16v16z','#111','#111',1),
	ppolar:'<circle cx="14" cy="12" r="9"/>'+t('r',11,17,16)+p('M1 1v22').replace('/>',' stroke-dasharray="2 2"/>'),
	pcandle:p('M5 1v22')+p('M2 6h6v11H2z','#111','#fff')+p('M18 3v21','#900')+p('M15 8h6v11h-6z','#900',R),
	box3g:p('M2 8l7-5h13v14l-7 5H2zM2 8h13v14M5 14q4-4 7 0','#777','#bbb'),
	bars3d:p('M2 12l5-4V3l8 1 7-3v14l-7 8H2zM7 9v14M12 6v16','#888','#ddd'),
	surf:front+p('M2 20l13-12 7 4-7 10z',G,'#aaa'),
	cube3d:front.replace('#ccc','#eee')+b([[7,13,3,3],[11,17,3,3]],G),
	contour:g(1,5,22,17,5,4,'#aaa','#888'),
	image:p('M1 8l5-5 5 5 5-5 6 5',G)+g(1,12,22,11,4,3,'#bbb','#888'),
	gsquare:p('M1 1h22v22H1z','#777','#a4a4a8'),
	mask1:cat,
	mask2:cat+b([[0,20,7,4],[9,20,6,4],[17,20,7,4]],G),
	mask3:cat.replace('#ddd','#aaa'),
	dotsg:mdot(G,G),
	dotsr:mdot('#111',R)+b([[8,6,5,5]],R),
	dotsr2:mdot('#111','#111')+b([[8,6,5,5]],R),
	rot1:p('M8 2h8v20H8z',G,'#aaa')+p('M8 12q-12 6 2 8M20 4q6 6-2 9',G),
	rot2:p('M12 2h8v20h-8z',G,'#aaa')+p('M12 19q-14 0-8-10M1 11l3-4 4 3',G),
	tilt1:p('M2 4l6-2 6 18-6 2z',G,'#aaa')+p('M24 7h-9M18 3l-4 4 4 4',G,0,3),
	tilt2:p('M16 2l6 1-4 20-6-2z',G,'#aaa')+p('M0 7h9M6 3l4 4-4 4',G,0,3),
	trap1:p('M8 5h8l6 12H2zM1 19h22v3H1zM12 1v4',G,'#aaa'),
	trap2:p('M2 7h20l-5 12H7zM1 2h22v4H1zM12 19v4',G,'#aaa'),
	persp1:p('M8 2h8v5H8zM1 14h22v8H1z',G,'#aaa')+p('M8 5l-7 9M16 5l7 9',G),
	persp2:p('M12 1h11v11H12zM1 11h13v12H1z',G,'#aaa'),
	fit:p('M8 8h8v8H8z',G,'#aaa')+p('M1 7V1h6M17 1h6v6M23 17v6h-6M7 23H1v-6M1 1l6 6M23 1l-6 6M23 23l-6-6M1 23l6-6',G),
	cubea:p('M5 10l4-4h9v9l-4 5H5zM5 10h9v10M14 10l4-4',G,'#bbb')+p('M10 0v6M18 14l6 2',G,0,3),
	cubeb:p('M6 10l4-4h9v9l-4 5H6zM6 10h9v10M15 10l4-4',G,'#bbb')+p('M2 8l6-7h15v15l-7 7H2z',G,'none',1),
	book:b([[0,0,24,24]])+b([[0,0,22,22]],'#e8f4e8')+b([[1,7,20,14]],'#46dc7a')+p('M1 7h20M1 14h20M7 0v21M14 0v21','#262',0,1.5)+p('M2 3h4M9 3h4M16 3h4',R,0,3),
	graph:b([[2,1,22,24]])+b([[0,0,21,23]],'#b8d4d4')+p('M0 0h21v23H0z','#556','none',1.5)+b([[4,4,15,7],[4,13,15,7]],'#19cfc9')+p('M4 9l5-3 5 2 5-4M4 18l5-3 4 3 5-3','#046',0,1.5)
};
function svg(n){
	return '<svg class="ic" viewBox="0 0 24 24">'+icons[n]+'</svg>';
}
//toolbars: "|" and "-" separators, "^" black arrow, ">" arrow in the set's own colour
document.querySelectorAll('[data-icons]').forEach(function(o){
	o.innerHTML = o.dataset.icons.split(' ').map(function(n){
		if(n=='|'||n=='-') return '<i class="bsep"></i>';
		if(n=='^') return '<i class="drop"></i>';
		if(n=='>') return '<i class="drop soft"></i>';
		var on = n.indexOf('*')>0;
		n = n.replace('*','');
		return '<button aria-label="'+n+'"'+(on?' class="down"':'')+'>'+svg(n)+'</button>';
	}).join('');
});
document.querySelectorAll('[data-ic]').forEach(function(o){o.innerHTML = svg(o.dataset.ic)});
document.querySelectorAll('.ctl').forEach(function(o){
	o.innerHTML = ['M2 9h14v5H2z','M1 1h16v16H1zM6 6h6v5H6z','M1 2h5l3 4 3-4h5l-5 7 5 7h-5l-3-4-3 4H1l5-7z'].map(function(d){
		return '<button><svg viewBox="0 0 18 18"><path d="'+d+'"/></svg></button>';
	}).join('');
});

//plots
var tri = [[257,137],[244,148],[259,155],[246,165],[247,179],[262,202],[254,220]],
	data = {
	s2:{
		tri:tri.concat([[245,321],[247,350],[241,359],[244,371],[249,376],[239,406],[250,437]]),
		red:[[286,297,278,316],[354,356,346,366],[404,445,429,459],[449,426,405,445],[481,376,361,390],[496,308,283,332],[559,185,170,200],[575,151,136,165]],
		blue:[[286,200],[353,219],[403,291],[449,332],[481,355],[496,406],[559,430],[575,450]],
		path:'M286 200Q318 207 338 219Q356 228 372 248Q388 270 403 290Q425 314 449 331Q466 341 475 352Q481 362 485 373Q496 402 518 411Q540 422 559 431L575 449',
		rt:[151,248,346,444],rm:[200,298,395]
	},
	s3:{
		tri:tri.concat([[253,276],[242,329],[254,335],[247,367],[240,376],[247,399],[252,437]]),
		red:[[300,319,292,345],[316,377,357,396],[336,412,391,431],[355,400,373,426],[404,386,364,411],[444,364,330,395],[469,303,284,322]],
		blue:[[300,263],[316,278],[336,343],[354,356],[403,356],[444,412],[469,422],[539,438]],
		path:'M300 263Q312 270 317 283L326 312Q332 338 343 349Q350 355 365 355Q388 355 403 364Q418 374 432 393Q444 411 469 421L539 438',
		rt:[428],rm:[]
	},
	all:{tri:tri,red:[],blue:[],path:'M0 0',rt:[],rm:[]}
};
function line(x1,y1,x2,y2,c){return '<path d="M'+x1+' '+y1+'L'+x2+' '+y2+'" stroke="'+c+'"/>'}
function lab(s,x,y,c,a,cls,rot){
	return '<text x="'+x+'" y="'+y+'" fill="'+c+'" stroke="none" text-anchor="'+(a||'middle')+'" class="'+(cls||'')+'"'+(rot?' transform="rotate(-90 '+x+' '+y+')"':'')+'>'+s+'</text>';
}
function triangle(x,y){return '<path d="M'+x+' '+(y-6)+'l6 11h-12z" fill="#0a8210" stroke="none"/>'}
function plot(d,k){
	var s = '', i, j, y, gr = '#0a8210', bl = '#1408e0';
	s += lab('Characteristics of Samples Grown Under Different Conditions',46,58,'#222','start','head');
	s += line(127,101,667,101,'#222')+line(127,493,667,493,'#222')+line(127,101,127,493,gr)+line(667,101,667,493,R);
	for(i=0;i<5;i++){
		var x = Math.round(175+i*98.5);
		s += line(x,101,x,108,'#222')+line(x,493,x,500,'#222')+lab(92-i*2,x,91,'#222')+lab(92-i*2,x,518,'#222');
		s += line(x+49,101,x+49,105,'#222')+line(x+49,493,x+49,496,'#222');
	}
	['100','10','1','0.1','0.01'].forEach(function(v,n){
		y = Math.round(126+n*78.3);
		s += line(119,y,127,y,gr)+lab(v,113,y+5,gr,'end');
	});
	for(i=-1;i<5;i++) for(j=2;j<10;j++){
		y = 204.3+i*78.3-Math.log10(j)*78.3;
		if(y>101&&y<493) s += line(122,y,127,y,gr);
	}
	d.rt.forEach(function(v){s += line(667,v,673,v,R)});
	d.rm.forEach(function(v){s += line(667,v,670,v,R)});
	s += lab('Transition Temperature (K)',427,542,'#222','middle','lab');
	s += lab('Deposition Pressure (Torr)',72,298,gr,'middle','lab',1);
	s += '<path d="'+d.path+'" stroke="'+bl+'"/>';
	d.tri.forEach(function(a){s += triangle(a[0],a[1])});
	d.red.forEach(function(a){
		s += '<path d="M'+a[0]+' '+a[2]+'V'+a[3]+'M'+(a[0]-4)+' '+a[2]+'h8M'+(a[0]-4)+' '+a[3]+'h8" stroke="#222"/><rect x="'+(a[0]-4)+'" y="'+(a[1]-4)+'" width="9" height="9" fill="#e8000c" stroke="none"/>';
	});
	d.blue.forEach(function(a){s += '<circle cx="'+a[0]+'" cy="'+a[1]+'" r="5" fill="'+bl+'" stroke="none"/>'});
	//legend
	s += '<path d="M441 121h131v71h-131z" fill="#000" stroke="none"/><path d="M436 116h131v70h-131z" fill="#fff" stroke="#222"/>';
	s += triangle(456,127)+'<rect x="452" y="145" width="8" height="8" fill="#e8000c" stroke="none"/>'+line(436,172,475,172,bl)+'<circle cx="456" cy="172" r="4" fill="'+bl+'" stroke="none"/>';
	s += lab('As Grown',486,134,'#222','start','lab')+lab('Annealed',486,156,'#222','start','lab')+lab('ΔT',486,178,'#222','start','lab')+lab('c',506,184,'#222','start','idx');
	//second and third y axes
	if(k!='s2'){
		s += line(736,101,736,493,bl);
		for(i=0;i<=12;i++){
			y = Math.round(493-i*32.67);
			s += line(736,y,i%2?739:742,y,bl);
			if(i%2==0) s += lab(i/2,752,y+5,bl);
		}
		s += '<text transform="rotate(-90 779 316)" x="779" y="316" class="lab" fill="'+bl+'" stroke="none">ΔT<tspan class="idx" dy="4">c</tspan><tspan dy="-4"> (K)</tspan></text>';
		s += lab('770',678,433,R,'start')+lab('Annealing Temperature (°C)',717,425,R,'start','lab',1);
	}
	return '<svg viewBox="0 0 832 590" fill="none" stroke-width="1.5">'+s+'</svg><div class="layers"><button>1</button><button>2</button><button>3</button></div>';
}
document.querySelectorAll('[data-plot]').forEach(function(o){o.innerHTML = plot(data[o.dataset.plot],o.dataset.plot)});
```
